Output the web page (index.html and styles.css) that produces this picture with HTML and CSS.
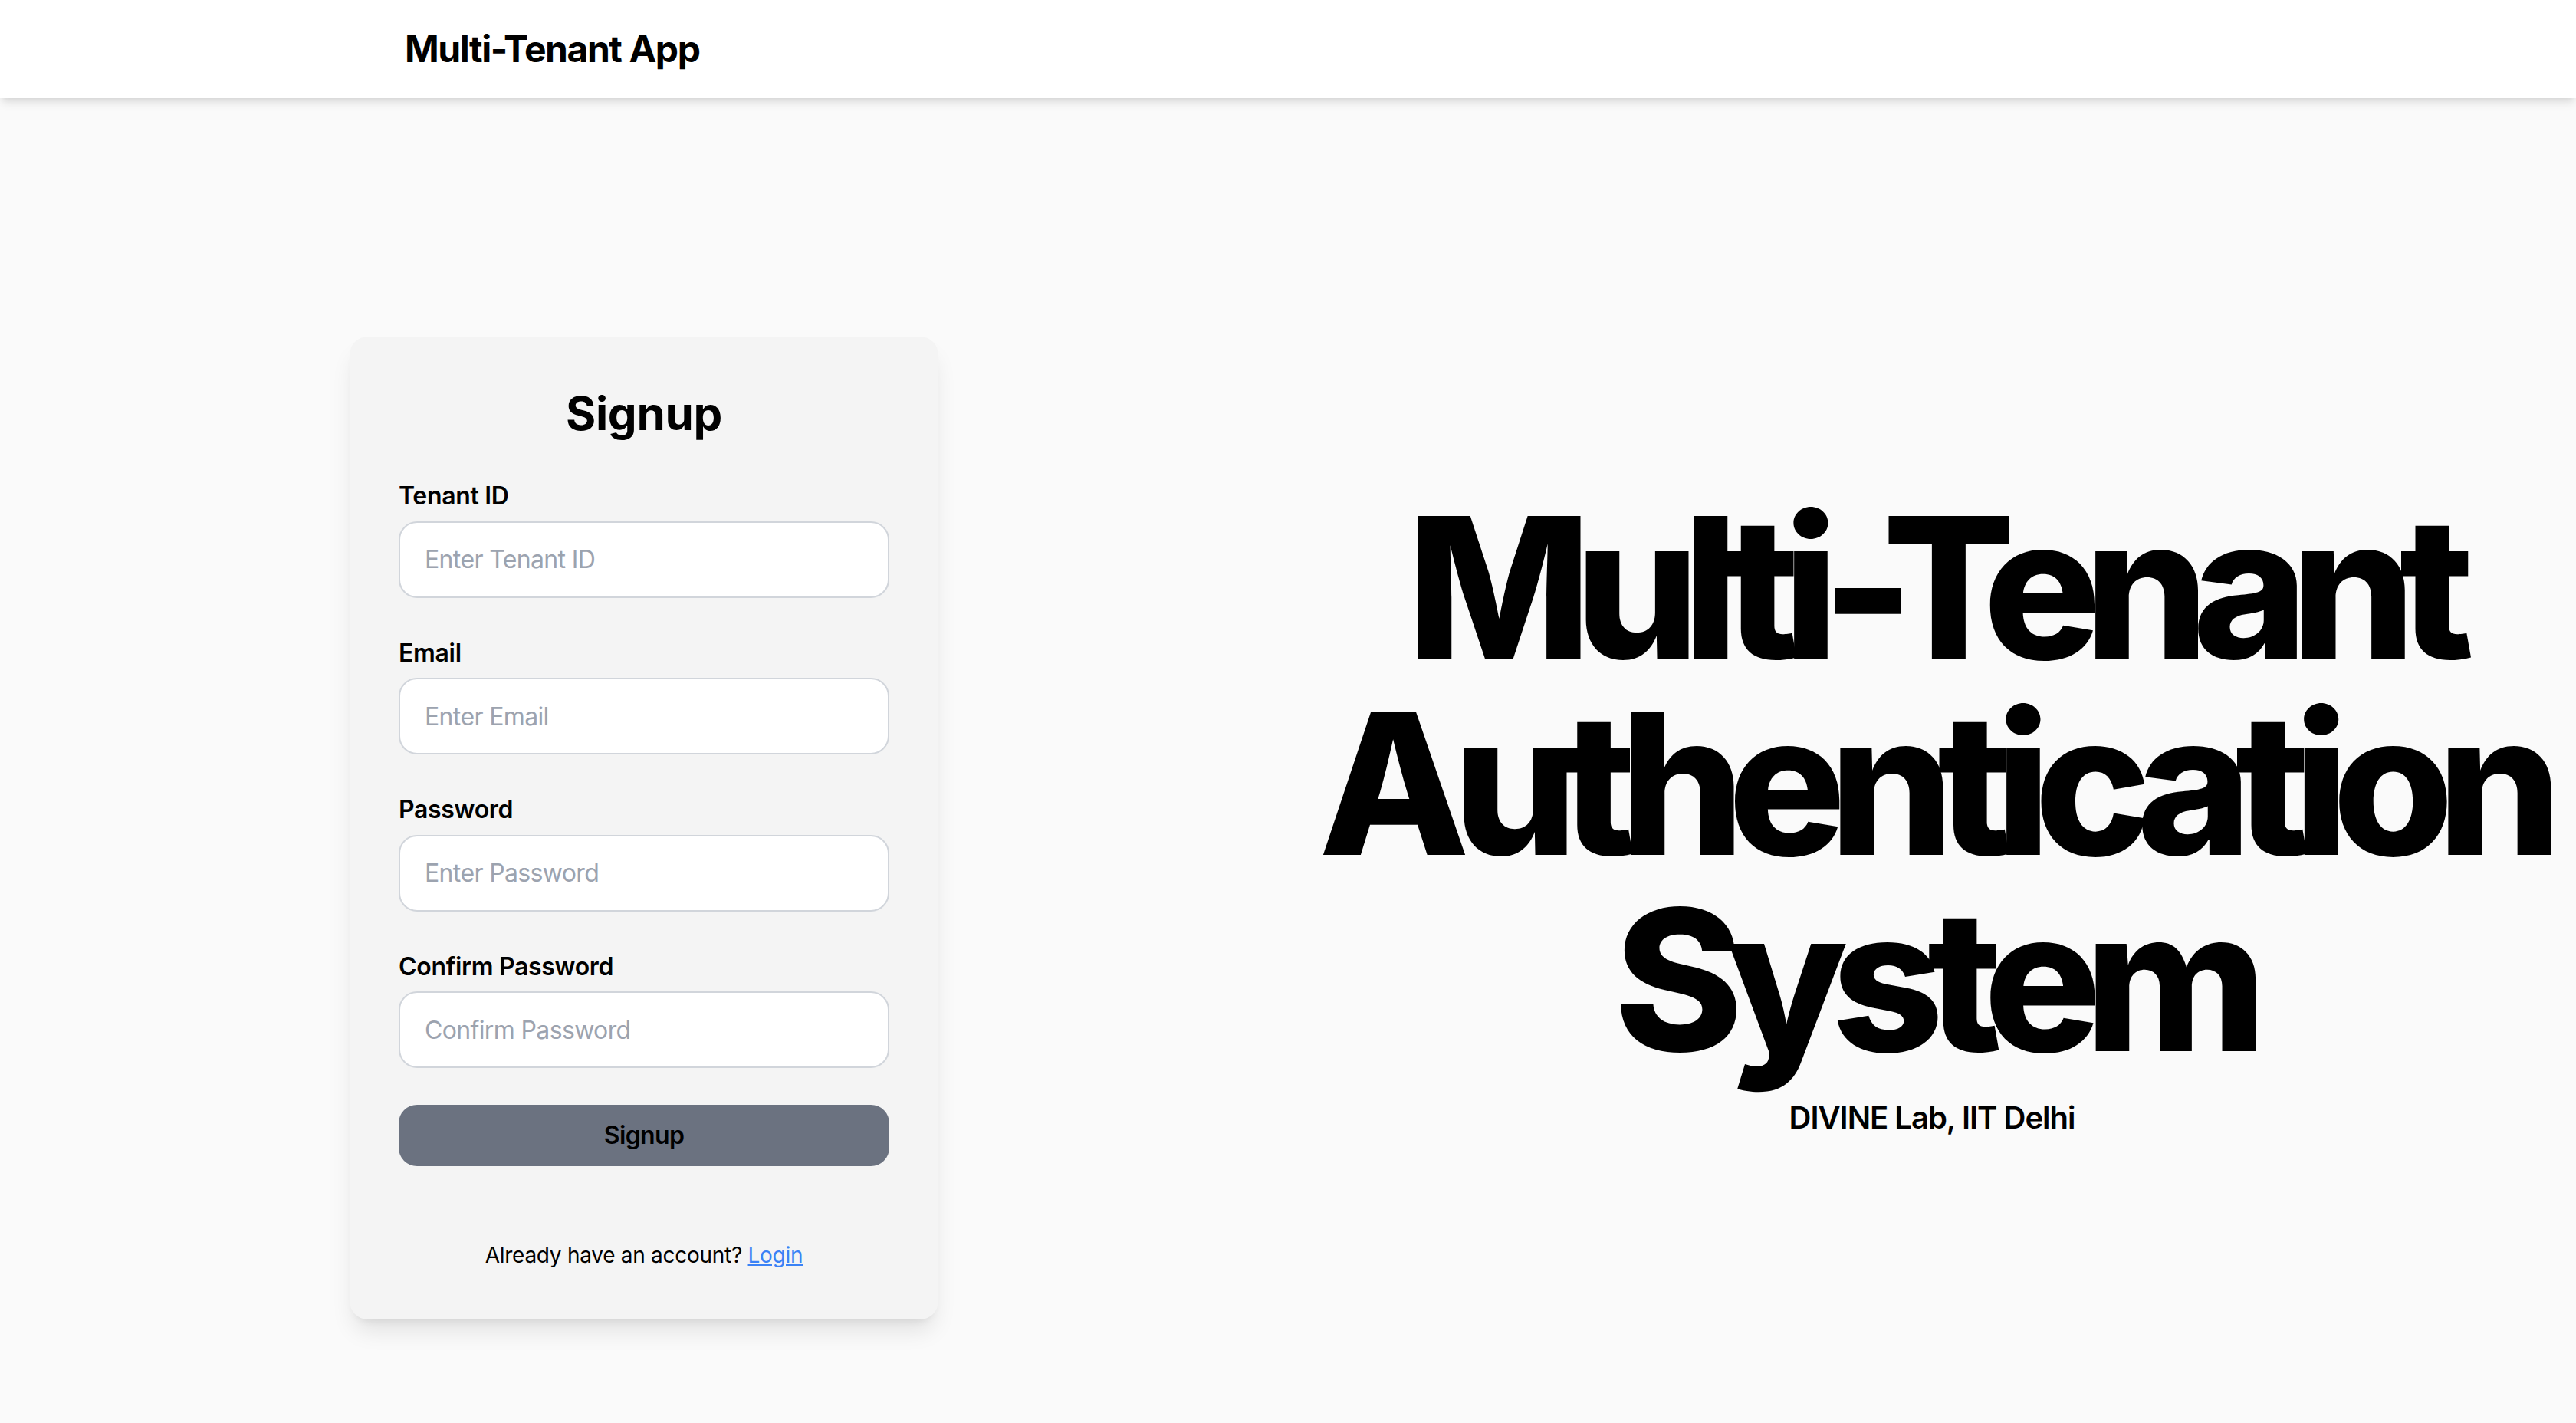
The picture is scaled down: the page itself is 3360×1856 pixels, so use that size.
FILE: index.html
```html
<!DOCTYPE html>
<html lang="en">
<head>
<meta charset="utf-8">
<title>Multi-Tenant App</title>
<link rel="stylesheet" href="styles.css">
</head>
<body>
<header class="topbar">
  <div class="topbar-inner">
    <span class="brand">Multi-Tenant App</span>
  </div>
</header>
<main class="main">
  <section class="col col-left">
    <div class="card">
      <h2 class="card-title">Signup</h2>
      <form class="form">
        <div class="field">
          <label class="label">Tenant ID</label>
          <input class="input" type="text" placeholder="Enter Tenant ID">
        </div>
        <div class="field">
          <label class="label">Email</label>
          <input class="input" type="email" placeholder="Enter Email">
        </div>
        <div class="field">
          <label class="label">Password</label>
          <input class="input" type="password" placeholder="Enter Password">
        </div>
        <div class="field">
          <label class="label">Confirm Password</label>
          <input class="input" type="password" placeholder="Confirm Password">
        </div>
        <button class="btn" type="button">Signup</button>
      </form>
      <p class="switch">Already have an account? <a class="link" href="#">Login</a></p>
    </div>
  </section>
  <section class="col col-right">
    <h1 class="hero">Multi-Tenant Authentication System</h1>
    <p class="sub">DIVINE Lab, IIT Delhi</p>
  </section>
</main>
</body>
</html>
```
FILE: styles.css
```css
* { box-sizing: border-box; }
html, body { margin: 0; padding: 0; }
body {
  font-family: Inter, "Noto Sans", "Liberation Sans", sans-serif;
  background: #fafafa;
  color: #000;
  letter-spacing: -0.02em;
}
.topbar {
  background: #fff;
  box-shadow: 0 8px 12px -2px rgba(0,0,0,0.10), 0 4px 8px -4px rgba(0,0,0,0.10);
  position: relative;
  z-index: 1;
}
.topbar-inner {
  width: 2304px;
  margin: 0 auto;
  padding: 32px 0;
}
.brand {
  display: block;
  font-size: 48px;
  line-height: 64px;
  font-weight: 700;
  letter-spacing: -0.03em;
}
.main {
  display: flex;
  min-height: 1856px;
  align-items: center;
}
.col { flex: 1 1 0; min-width: 0; }
.col-left { display: flex; justify-content: center; }
.card {
  width: 768px;
  margin-top: 48px;
  padding: 64px;
  background: #f4f4f4;
  border-radius: 24px;
  box-shadow: 0 20px 30px -6px rgba(0,0,0,0.10), 0 8px 12px -8px rgba(0,0,0,0.10);
}
.card-title {
  margin: 0 0 48px;
  font-size: 60px;
  line-height: 72px;
  font-weight: 700;
  text-align: center;
}
.form { margin: 0; }
.field { margin-bottom: 48px; }
.label {
  display: block;
  font-size: 32px;
  line-height: 48px;
  font-weight: 600;
  margin-bottom: 8.5px;
}
.input {
  display: block;
  width: 100%;
  height: 100px;
  padding: 24px 32px;
  font-family: inherit;
  font-size: 32px;
  line-height: 48px;
  letter-spacing: -0.02em;
  border: 2px solid #d1d5db;
  border-radius: 24px;
  background: #fff;
  color: #000;
  outline: none;
}
.input::placeholder { color: #9ca3af; }
.btn {
  display: block;
  width: 100%;
  height: 80px;
  padding: 16px 0;
  border: 0;
  border-radius: 24px;
  background: #6b7280;
  color: #000;
  font-family: inherit;
  font-size: 32px;
  line-height: 48px;
  font-weight: 600;
  letter-spacing: -0.02em;
}
.switch {
  margin: 96px 0 0;
  text-align: center;
  font-size: 28px;
  line-height: 40px;
  letter-spacing: -0.01em;
}
.link { color: #3b82f6; text-decoration: underline; }
.col-right { text-align: center; }
.hero {
  margin: 0;
  padding-top: 12px;
  font-size: 256px;
  line-height: 256px;
  font-weight: 800;
  letter-spacing: -0.085em;
}
.sub {
  margin: 24px 0 0;
  font-size: 40px;
  line-height: 56px;
  font-weight: 600;
  letter-spacing: -0.025em;
}
```
